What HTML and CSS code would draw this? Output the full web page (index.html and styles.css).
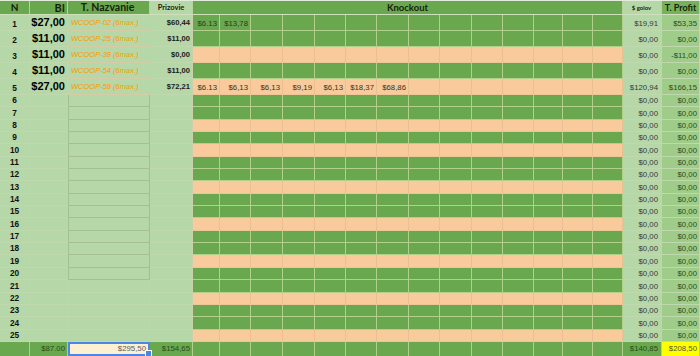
FILE: index.html
```html
<!DOCTYPE html>
<html>
<head>
<meta charset="utf-8">
<title>Knockout</title>
<link rel="stylesheet" href="styles.css">
</head>
<body>
<div class="sheet">
  <div class="row hd">
    <div class="c n hn">N</div>
    <div class="c bi hb">BI</div>
    <div class="c nz hz">T. Nazvanie</div>
    <div class="c pz hp">Prizovie</div>
    <div class="c kh">Knockout</div>
    <div class="c g hg">$ golov</div>
    <div class="c p hpr">T. Profit</div>
  </div>

  <div class="row big">
    <div class="c n">1</div><div class="c bi">$27,00</div><div class="c nz bx1">WCOOP-02 (6max.)</div><div class="c pz">$60,44</div>
    <div class="ko"><i>$6.13</i><i>$13,78</i><i></i><i></i><i></i><i></i><i></i><i></i><i></i><i></i><i></i><i></i><i></i><i></i></div>
    <div class="c g">$19,91</div><div class="c p">$53,35</div>
  </div>
  <div class="row big">
    <div class="c n">2</div><div class="c bi">$11,00</div><div class="c nz bx1">WCOOP-25 (6max.)</div><div class="c pz">$11,00</div>
    <div class="ko"><i></i><i></i><i></i><i></i><i></i><i></i><i></i><i></i><i></i><i></i><i></i><i></i><i></i><i></i></div>
    <div class="c g">$0,00</div><div class="c p">$0,00</div>
  </div>
  <div class="row big pe">
    <div class="c n">3</div><div class="c bi">$11,00</div><div class="c nz bx1">WCOOP-38 (6max.)</div><div class="c pz">$0,00</div>
    <div class="ko"><i></i><i></i><i></i><i></i><i></i><i></i><i></i><i></i><i></i><i></i><i></i><i></i><i></i><i></i></div>
    <div class="c g">$0,00</div><div class="c p">-$11,00</div>
  </div>
  <div class="row big">
    <div class="c n">4</div><div class="c bi">$11,00</div><div class="c nz bx1">WCOOP-54 (6max.)</div><div class="c pz">$11,00</div>
    <div class="ko"><i></i><i></i><i></i><i></i><i></i><i></i><i></i><i></i><i></i><i></i><i></i><i></i><i></i><i></i></div>
    <div class="c g">$0,00</div><div class="c p">$0,00</div>
  </div>
  <div class="row big pe">
    <div class="c n">5</div><div class="c bi">$27,00</div><div class="c nz bx1">WCOOP-59 (6max.)</div><div class="c pz">$72,21</div>
    <div class="ko"><i>$6.13</i><i>$6,13</i><i>$6,13</i><i>$9,19</i><i>$6,13</i><i>$18,37</i><i>$68,86</i><i></i><i></i><i></i><i></i><i></i><i></i><i></i></div>
    <div class="c g">$120,94</div><div class="c p">$166,15</div>
  </div>

  <div class="row sm">
    <div class="c n">6</div><div class="c bi"></div><div class="c nz box"></div><div class="c pz"></div>
    <div class="ko"><i></i><i></i><i></i><i></i><i></i><i></i><i></i><i></i><i></i><i></i><i></i><i></i><i></i><i></i></div>
    <div class="c g">$0,00</div><div class="c p">$0,00</div>
  </div>
  <div class="row sm">
    <div class="c n">7</div><div class="c bi"></div><div class="c nz box"></div><div class="c pz"></div>
    <div class="ko"><i></i><i></i><i></i><i></i><i></i><i></i><i></i><i></i><i></i><i></i><i></i><i></i><i></i><i></i></div>
    <div class="c g">$0,00</div><div class="c p">$0,00</div>
  </div>
  <div class="row sm pe">
    <div class="c n">8</div><div class="c bi"></div><div class="c nz box"></div><div class="c pz"></div>
    <div class="ko"><i></i><i></i><i></i><i></i><i></i><i></i><i></i><i></i><i></i><i></i><i></i><i></i><i></i><i></i></div>
    <div class="c g">$0,00</div><div class="c p">$0,00</div>
  </div>
  <div class="row sm">
    <div class="c n">9</div><div class="c bi"></div><div class="c nz box"></div><div class="c pz"></div>
    <div class="ko"><i></i><i></i><i></i><i></i><i></i><i></i><i></i><i></i><i></i><i></i><i></i><i></i><i></i><i></i></div>
    <div class="c g">$0,00</div><div class="c p">$0,00</div>
  </div>
  <div class="row sm pe">
    <div class="c n">10</div><div class="c bi"></div><div class="c nz box"></div><div class="c pz"></div>
    <div class="ko"><i></i><i></i><i></i><i></i><i></i><i></i><i></i><i></i><i></i><i></i><i></i><i></i><i></i><i></i></div>
    <div class="c g">$0,00</div><div class="c p">$0,00</div>
  </div>
  <div class="row sm">
    <div class="c n">11</div><div class="c bi"></div><div class="c nz box"></div><div class="c pz"></div>
    <div class="ko"><i></i><i></i><i></i><i></i><i></i><i></i><i></i><i></i><i></i><i></i><i></i><i></i><i></i><i></i></div>
    <div class="c g">$0,00</div><div class="c p">$0,00</div>
  </div>
  <div class="row sm">
    <div class="c n">12</div><div class="c bi"></div><div class="c nz box"></div><div class="c pz"></div>
    <div class="ko"><i></i><i></i><i></i><i></i><i></i><i></i><i></i><i></i><i></i><i></i><i></i><i></i><i></i><i></i></div>
    <div class="c g">$0,00</div><div class="c p">$0,00</div>
  </div>
  <div class="row sm pe">
    <div class="c n">13</div><div class="c bi"></div><div class="c nz box"></div><div class="c pz"></div>
    <div class="ko"><i></i><i></i><i></i><i></i><i></i><i></i><i></i><i></i><i></i><i></i><i></i><i></i><i></i><i></i></div>
    <div class="c g">$0,00</div><div class="c p">$0,00</div>
  </div>
  <div class="row sm">
    <div class="c n">14</div><div class="c bi"></div><div class="c nz box"></div><div class="c pz"></div>
    <div class="ko"><i></i><i></i><i></i><i></i><i></i><i></i><i></i><i></i><i></i><i></i><i></i><i></i><i></i><i></i></div>
    <div class="c g">$0,00</div><div class="c p">$0,00</div>
  </div>
  <div class="row sm">
    <div class="c n">15</div><div class="c bi"></div><div class="c nz box"></div><div class="c pz"></div>
    <div class="ko"><i></i><i></i><i></i><i></i><i></i><i></i><i></i><i></i><i></i><i></i><i></i><i></i><i></i><i></i></div>
    <div class="c g">$0,00</div><div class="c p">$0,00</div>
  </div>
  <div class="row sm pe">
    <div class="c n">16</div><div class="c bi"></div><div class="c nz box"></div><div class="c pz"></div>
    <div class="ko"><i></i><i></i><i></i><i></i><i></i><i></i><i></i><i></i><i></i><i></i><i></i><i></i><i></i><i></i></div>
    <div class="c g">$0,00</div><div class="c p">$0,00</div>
  </div>
  <div class="row sm">
    <div class="c n">17</div><div class="c bi"></div><div class="c nz box"></div><div class="c pz"></div>
    <div class="ko"><i></i><i></i><i></i><i></i><i></i><i></i><i></i><i></i><i></i><i></i><i></i><i></i><i></i><i></i></div>
    <div class="c g">$0,00</div><div class="c p">$0,00</div>
  </div>
  <div class="row sm">
    <div class="c n">18</div><div class="c bi"></div><div class="c nz box"></div><div class="c pz"></div>
    <div class="ko"><i></i><i></i><i></i><i></i><i></i><i></i><i></i><i></i><i></i><i></i><i></i><i></i><i></i><i></i></div>
    <div class="c g">$0,00</div><div class="c p">$0,00</div>
  </div>
  <div class="row sm pe">
    <div class="c n">19</div><div class="c bi"></div><div class="c nz box"></div><div class="c pz"></div>
    <div class="ko"><i></i><i></i><i></i><i></i><i></i><i></i><i></i><i></i><i></i><i></i><i></i><i></i><i></i><i></i></div>
    <div class="c g">$0,00</div><div class="c p">$0,00</div>
  </div>
  <div class="row sm">
    <div class="c n">20</div><div class="c bi"></div><div class="c nz box"></div><div class="c pz"></div>
    <div class="ko"><i></i><i></i><i></i><i></i><i></i><i></i><i></i><i></i><i></i><i></i><i></i><i></i><i></i><i></i></div>
    <div class="c g">$0,00</div><div class="c p">$0,00</div>
  </div>
  <div class="row sm">
    <div class="c n">21</div><div class="c bi"></div><div class="c nz"></div><div class="c pz"></div>
    <div class="ko"><i></i><i></i><i></i><i></i><i></i><i></i><i></i><i></i><i></i><i></i><i></i><i></i><i></i><i></i></div>
    <div class="c g">$0,00</div><div class="c p">$0,00</div>
  </div>
  <div class="row sm pe">
    <div class="c n">22</div><div class="c bi"></div><div class="c nz"></div><div class="c pz"></div>
    <div class="ko"><i></i><i></i><i></i><i></i><i></i><i></i><i></i><i></i><i></i><i></i><i></i><i></i><i></i><i></i></div>
    <div class="c g">$0,00</div><div class="c p">$0,00</div>
  </div>
  <div class="row sm">
    <div class="c n">23</div><div class="c bi"></div><div class="c nz"></div><div class="c pz"></div>
    <div class="ko"><i></i><i></i><i></i><i></i><i></i><i></i><i></i><i></i><i></i><i></i><i></i><i></i><i></i><i></i></div>
    <div class="c g">$0,00</div><div class="c p">$0,00</div>
  </div>
  <div class="row sm">
    <div class="c n">24</div><div class="c bi"></div><div class="c nz"></div><div class="c pz"></div>
    <div class="ko"><i></i><i></i><i></i><i></i><i></i><i></i><i></i><i></i><i></i><i></i><i></i><i></i><i></i><i></i></div>
    <div class="c g">$0,00</div><div class="c p">$0,00</div>
  </div>
  <div class="row sm pe">
    <div class="c n">25</div><div class="c bi"></div><div class="c nz"></div><div class="c pz"></div>
    <div class="ko"><i></i><i></i><i></i><i></i><i></i><i></i><i></i><i></i><i></i><i></i><i></i><i></i><i></i><i></i></div>
    <div class="c g">$0,00</div><div class="c p">$0,00</div>
  </div>

  <div class="row ft">
    <div class="c n"></div><div class="c bi">$87.00</div><div class="c nz sel">$295,50</div><div class="c pz">$154,65</div>
    <div class="ko"><i></i><i></i><i></i><i></i><i></i><i></i><i></i><i></i><i></i><i></i><i></i><i></i><i></i><i></i></div>
    <div class="c g">$140,85</div><div class="c p">$208,50</div>
  </div>
</div>
</body>
</html>
```

FILE: styles.css
```css
html, body {
  margin: 0;
  padding: 0;
  background: #ffffff;
}

body {
  font-family: "Liberation Sans", Arial, sans-serif;
  overflow: hidden;
}

.sheet {
  width: 700px;
  display: flex;
  flex-direction: column;
}

.row {
  display: grid;
  grid-template-columns: 30px 38px 82px 43px 430px 39px 38px;
  box-sizing: border-box;
  flex: none;
}

.hd { height: 15px; border-top: 1px solid #e4ecdc; }
.big { height: 16px; }
.sm { height: 12.35px; }
.ft { height: 14px; }

.c {
  box-sizing: border-box;
  display: flex;
  align-items: flex-end;
  justify-content: flex-end;
  padding: 0 2px 1px 2px;
  border-right: 1px solid #cbcfaa;
  border-bottom: 1px solid #bfd8ae;
  white-space: nowrap;
  overflow: hidden;
  font-size: 7.5px;
  line-height: 9px;
  color: #333333;
  background: #b6d7a8;
}

/* knockout block */
.ko {
  display: grid;
  grid-template-columns: 27px 31px 32px 32px 31px 31px 32px 31px 32px 31px 31px 29px 30px 30px;
}

.ko i {
  box-sizing: border-box;
  display: flex;
  align-items: flex-end;
  justify-content: flex-end;
  padding: 0 2px 1px 0;
  font-style: normal;
  font-size: 7.8px;
  line-height: 9px;
  color: #2c3a22;
  white-space: nowrap;
  overflow: hidden;
  background: #6aa84f;
  border-right: 1px solid #b3cf8c;
  border-bottom: 1px solid #b3cf8c;
}

.pe .ko i {
  background: #f9cb9c;
  border-right-color: #e9c091;
  border-bottom-color: #edc697;
}

.big .ko i { padding-bottom: 2px; }

/* columns */
.n {
  justify-content: center;
  font-weight: bold;
  font-size: 8.3px;
  color: #111111;
  padding-bottom: 1px;
}

.bi {
  font-weight: bold;
  font-size: 11px;
  line-height: 12px;
  color: #000000;
  padding-right: 2px;
  padding-bottom: 2px;
}

.nz {
  justify-content: flex-start;
  font-style: italic;
  font-size: 7.5px;
  color: #ff9900;
  padding-left: 3px;
  padding-bottom: 3px;
}

.bx1 {
  border-bottom-color: #d6cba4;
  border-right-color: #cfc9a6;
}

.box {
  border-left: 1px solid #a3bf93;
  border-right-color: #a3bf93;
  border-bottom-color: #a3bf93;
}

.pz {
  font-weight: bold;
  font-size: 7.6px;
  color: #1a1a1a;
  padding-bottom: 3px;
}

.g {
  font-size: 7.8px;
  color: #3a3a3a;
  padding-right: 3px;
}

.p {
  font-size: 7.8px;
  background: #9fcc88;
  color: #2f4a22;
  padding-right: 2px;
}

.big .g, .big .p { padding-bottom: 2px; }

/* header */
.hd .c {
  align-items: center;
  padding-bottom: 0;
  font-family: "Lato", "DejaVu Sans", sans-serif;
  font-weight: bold;
  font-style: normal;
  color: #16230c;
  background: #6aa84f;
  border-bottom-color: #cfe0bd;
  border-right-color: #b9d19c;
}

.hn { font-size: 10px; justify-content: center; }
.hb { font-size: 11px; justify-content: flex-end; padding-right: 2px; }
.hz { font-size: 10.5px; justify-content: center; padding-left: 0; }
.hd .hp { font-size: 7.5px; justify-content: center; background: #b6d7a8; }
.hd .kh { font-size: 9.5px; justify-content: center; }
.hd .hg { font-size: 6px; justify-content: center; background: #b6d7a8; }
.hd .hpr { font-size: 9px; justify-content: center; background: #77b25b; }

/* footer */
.ft .c {
  background: #6aa84f;
  color: #274e13;
  border-right-color: #b3cf8c;
  border-bottom: none;
  font-weight: normal;
  font-style: normal;
  font-size: 7.8px;
  align-items: center;
  padding-bottom: 0;
}

.ft .ko i { border-bottom: none; }

.ft .sel {
  position: relative;
  overflow: visible;
  justify-content: flex-end;
  background: #fdefd2;
  color: #5a5a5a;
  border: 2px solid #4a86e8;
  padding-right: 2px;
}

.ft .sel::after {
  content: "";
  position: absolute;
  right: -4px;
  bottom: -3px;
  width: 5px;
  height: 5px;
  background: #4a86e8;
  border: 1px solid #ffffff;
}

.ft .p {
  background: #ffff00;
  color: #555533;
}
```
